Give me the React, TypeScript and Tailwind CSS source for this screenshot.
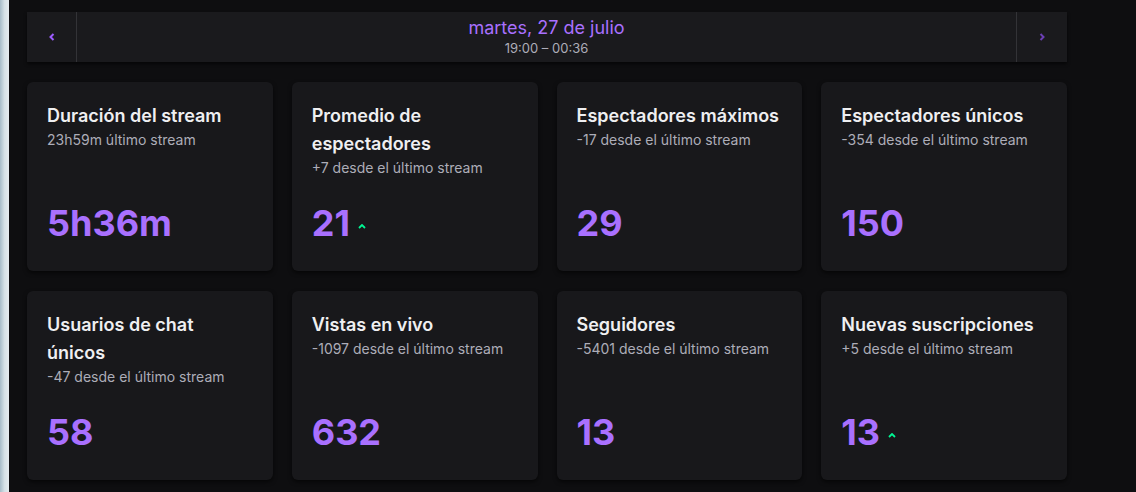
import React from 'react';

type Stat = {
  title: string;
  delta: string;
  value: string;
  up?: boolean;
};

const stats: Stat[] = [
  { title: 'Duración del stream', delta: '23h59m último stream', value: '5h36m' },
  { title: 'Promedio de espectadores', delta: '+7 desde el último stream', value: '21', up: true },
  { title: 'Espectadores máximos', delta: '-17 desde el último stream', value: '29' },
  { title: 'Espectadores únicos', delta: '-354 desde el último stream', value: '150' },
  { title: 'Usuarios de chat únicos', delta: '-47 desde el último stream', value: '58' },
  { title: 'Vistas en vivo', delta: '-1097 desde el último stream', value: '632' },
  { title: 'Seguidores', delta: '-5401 desde el último stream', value: '13' },
  { title: 'Nuevas suscripciones', delta: '+5 desde el último stream', value: '13', up: true },
];

const Chevron = ({ dir, className }: { dir: 'left' | 'right'; className: string }) => (
  <svg width="6" height="8" viewBox="0 0 6 8" className={className}>
    <path
      d={dir === 'left' ? 'M4.5 1 L1.5 4 L4.5 7' : 'M1.5 1 L4.5 4 L1.5 7'}
      fill="none"
      stroke="currentColor"
      strokeWidth="2"
    />
  </svg>
);

const UpArrow = () => (
  <svg width="8" height="5" viewBox="0 0 8 5" className="text-[#00f593] mt-[6px]">
    <path d="M1 4 L4 1 L7 4" fill="none" stroke="currentColor" strokeWidth="1.8" />
  </svg>
);

const StatCard = ({ stat }: { stat: Stat }) => (
  <div className="h-[189px] bg-[#18181b] rounded-md shadow-[0_2px_4px_rgba(0,0,0,0.6)] px-5 pt-5 pb-7 flex flex-col justify-between">
    <div>
      <h3 className="text-[18px] leading-7 font-semibold text-[#efeff1]">{stat.title}</h3>
      <p className="text-sm leading-5 text-[#adadb8]">{stat.delta}</p>
    </div>
    <div className="flex items-center gap-2">
      <span className="text-4xl leading-10 font-bold text-[#a970ff]">{stat.value}</span>
      {stat.up && <UpArrow />}
    </div>
  </div>
);

export default function App() {
  return (
    <div className="w-[1136px] h-[492px] flex bg-[#0e0e10] overflow-hidden" style={{ fontFamily: 'Inter, "Noto Sans", sans-serif' }}>
      {/* window edge behind the app */}
      <div className="w-[9px] shrink-0 bg-gradient-to-r from-[#a7bcc8] via-[#d5e1e6] to-[#e6ecef]" />

      <main className="w-[1040px] ml-[18px] pt-3">
        {/* date navigator */}
        <div className="h-[50px] flex bg-[#1a1a1d] shadow-[0_2px_3px_rgba(0,0,0,0.6)]">
          <button className="w-[50px] flex items-center justify-center border-r border-[#333337]">
            <Chevron dir="left" className="text-[#9d5cff]" />
          </button>
          <div className="flex-1 flex flex-col items-center justify-center">
            <span className="text-[18px] leading-6 text-[#a970ff] -mt-[2px]">martes, 27 de julio</span>
            <span className="text-[13px] leading-4 text-[#adadb8]">19:00 – 00:36</span>
          </div>
          <button className="w-[51px] flex items-center justify-center border-l border-[#333337]">
            <Chevron dir="right" className="text-[#6c3fb5]" />
          </button>
        </div>

        <div className="mt-5 grid grid-cols-4 gap-x-[19px] gap-y-5">
          {stats.map((s) => (
            <StatCard key={s.title} stat={s} />
          ))}
        </div>
      </main>
    </div>
  );
}
